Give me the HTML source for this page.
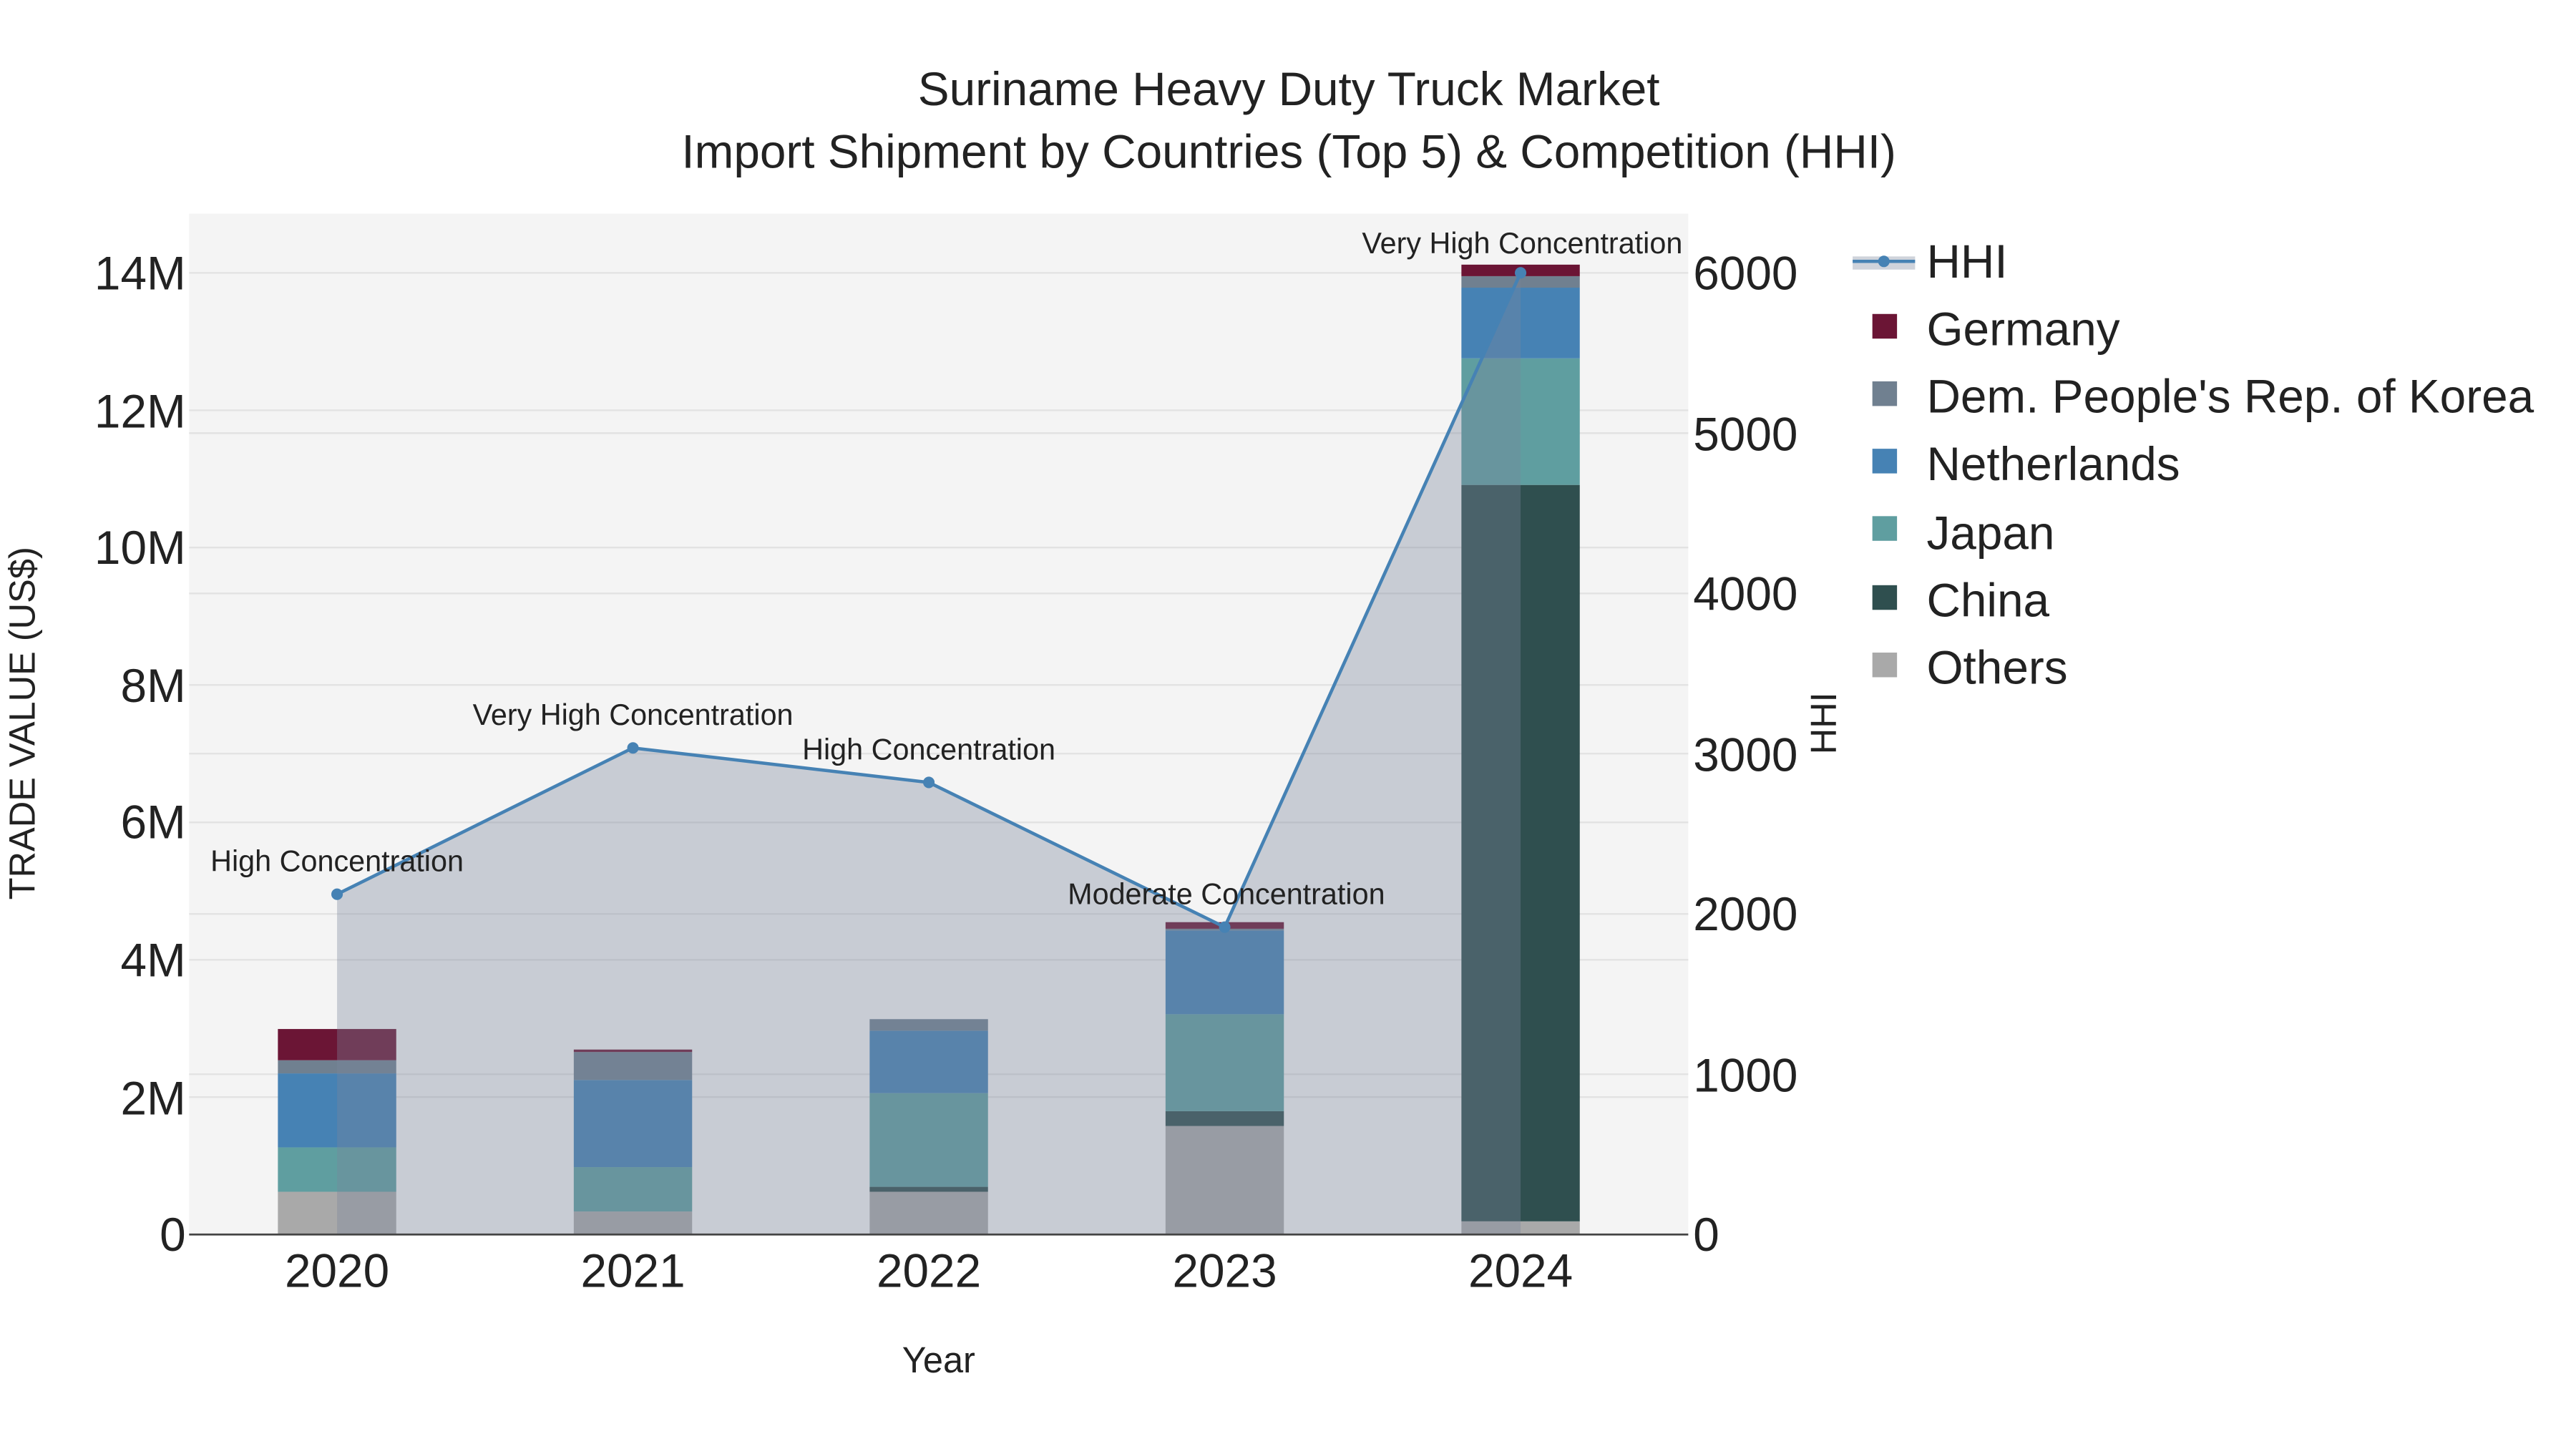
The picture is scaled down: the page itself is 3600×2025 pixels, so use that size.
<!DOCTYPE html>
<html><head><meta charset="utf-8"><style>html,body{margin:0;padding:0;background:#fff}svg{display:block}text{font-family:"Liberation Sans",sans-serif;fill:#222}</style></head>
<body>
<svg width="3600" height="2025" viewBox="0 0 1567 881.5" xmlns="http://www.w3.org/2000/svg">
<rect x="0" y="0" width="1567" height="881.5" fill="#fff"/>
<rect x="115" y="130" width="912" height="621" fill="#f4f4f4"/>
<g stroke="#e2e2e2" stroke-width="1">
<line x1="115" x2="1027" y1="667.4" y2="667.4"/><line x1="115" x2="1027" y1="583.9" y2="583.9"/><line x1="115" x2="1027" y1="500.3" y2="500.3"/><line x1="115" x2="1027" y1="416.7" y2="416.7"/><line x1="115" x2="1027" y1="333.1" y2="333.1"/><line x1="115" x2="1027" y1="249.6" y2="249.6"/><line x1="115" x2="1027" y1="166" y2="166"/>
<line x1="115" x2="1027" y1="653.5" y2="653.5"/><line x1="115" x2="1027" y1="556" y2="556"/><line x1="115" x2="1027" y1="458.5" y2="458.5"/><line x1="115" x2="1027" y1="361" y2="361"/><line x1="115" x2="1027" y1="263.5" y2="263.5"/>
</g>
<g>
<rect x="169" y="725" width="72" height="26" fill="#a9a9a9"/><rect x="169" y="698" width="72" height="27" fill="#5f9ea0"/><rect x="169" y="653" width="72" height="45" fill="#4682b4"/><rect x="169" y="645" width="72" height="8" fill="#708090"/><rect x="169" y="626" width="72" height="19" fill="#6b1535"/>
<rect x="349" y="737" width="72" height="14" fill="#a9a9a9"/><rect x="349" y="710" width="72" height="27" fill="#5f9ea0"/><rect x="349" y="657" width="72" height="53" fill="#4682b4"/><rect x="349" y="640" width="72" height="17" fill="#708090"/><rect x="349" y="638.5" width="72" height="1.5" fill="#6b1535"/>
<rect x="529" y="725" width="72" height="26" fill="#a9a9a9"/><rect x="529" y="722" width="72" height="3" fill="#2f4f4f"/><rect x="529" y="665" width="72" height="57" fill="#5f9ea0"/><rect x="529" y="627" width="72" height="38" fill="#4682b4"/><rect x="529" y="620" width="72" height="7" fill="#708090"/>
<rect x="709" y="685" width="72" height="66" fill="#a9a9a9"/><rect x="709" y="676" width="72" height="9" fill="#2f4f4f"/><rect x="709" y="617" width="72" height="59" fill="#5f9ea0"/><rect x="709" y="566" width="72" height="51" fill="#4682b4"/><rect x="709" y="565" width="72" height="1" fill="#708090"/><rect x="709" y="561" width="72" height="4" fill="#6b1535"/>
<rect x="889" y="743" width="72" height="8" fill="#a9a9a9"/><rect x="889" y="295" width="72" height="448" fill="#2f4f4f"/><rect x="889" y="218" width="72" height="77" fill="#5f9ea0"/><rect x="889" y="175" width="72" height="43" fill="#4682b4"/><rect x="889" y="168" width="72" height="7" fill="#708090"/><rect x="889" y="161" width="72" height="7" fill="#6b1535"/>
</g>
<path d="M205,751 L205,544 L385,455 L565,476 L745,564 L925,166 L925,751 Z" fill="rgb(122,133,155)" fill-opacity="0.36"/>
<polyline points="205,544 385,455 565,476 745,564 925,166" fill="none" stroke="#4682b4" stroke-width="2"/>
<g fill="#4682b4"><circle cx="205" cy="544" r="3.5"/><circle cx="385" cy="455" r="3.5"/><circle cx="565" cy="476" r="3.5"/><circle cx="745" cy="564" r="3.5"/><circle cx="925" cy="166" r="3.5"/></g>
<line x1="115" x2="1027" y1="751" y2="751" stroke="#444" stroke-width="1.2"/>
<g font-size="18" text-anchor="middle">
<text x="205" y="530">High Concentration</text><text x="385" y="441">Very High Concentration</text><text x="565" y="462">High Concentration</text><text x="746" y="550">Moderate Concentration</text><text x="926" y="154">Very High Concentration</text>
</g>
<g font-size="28.6" text-anchor="end">
<text x="113" y="761">0</text><text x="113" y="678">2M</text><text x="113" y="594">4M</text><text x="113" y="510">6M</text><text x="113" y="427">8M</text><text x="113" y="343">10M</text><text x="113" y="260">12M</text><text x="113" y="176">14M</text>
</g>
<g font-size="28.6">
<text x="1030" y="761">0</text><text x="1030" y="664">1000</text><text x="1030" y="566">2000</text><text x="1030" y="469">3000</text><text x="1030" y="371">4000</text><text x="1030" y="274">5000</text><text x="1030" y="176">6000</text>
</g>
<g font-size="28.6" text-anchor="middle">
<text x="205" y="783">2020</text><text x="385" y="783">2021</text><text x="565" y="783">2022</text><text x="745" y="783">2023</text><text x="925" y="783">2024</text>
</g>
<text x="571" y="835" font-size="22" text-anchor="middle">Year</text>
<text transform="translate(21,440) rotate(-90)" font-size="22" text-anchor="middle">TRADE VALUE (US$)</text>
<text transform="translate(1117,440) rotate(-90)" font-size="22" text-anchor="middle">HHI</text>
<text x="784" y="64" font-size="28.6" text-anchor="middle">Suriname Heavy Duty Truck Market</text>
<text x="784" y="102" font-size="28.6" text-anchor="middle">Import Shipment by Countries (Top 5) &amp; Competition (HHI)</text>
<rect x="1127" y="156" width="38" height="8" fill="rgb(122,133,155)" fill-opacity="0.36"/>
<line x1="1127" x2="1165" y1="159" y2="159" stroke="#4682b4" stroke-width="2"/><circle cx="1146" cy="159" r="3.5" fill="#4682b4"/>
<rect x="1139" y="191" width="15" height="15" fill="#6b1535"/>
<rect x="1139" y="232" width="15" height="15" fill="#708090"/>
<rect x="1139" y="273" width="15" height="15" fill="#4682b4"/>
<rect x="1139" y="314" width="15" height="15" fill="#5f9ea0"/>
<rect x="1139" y="356" width="15" height="15" fill="#2f4f4f"/>
<rect x="1139" y="397" width="15" height="15" fill="#a9a9a9"/>
<g font-size="28.6">
<text x="1172" y="169">HHI</text><text x="1172" y="210">Germany</text><text x="1172" y="251">Dem. People's Rep. of Korea</text><text x="1172" y="292">Netherlands</text><text x="1172" y="334">Japan</text><text x="1172" y="375">China</text><text x="1172" y="416">Others</text>
</g>
</svg>
</body></html>
